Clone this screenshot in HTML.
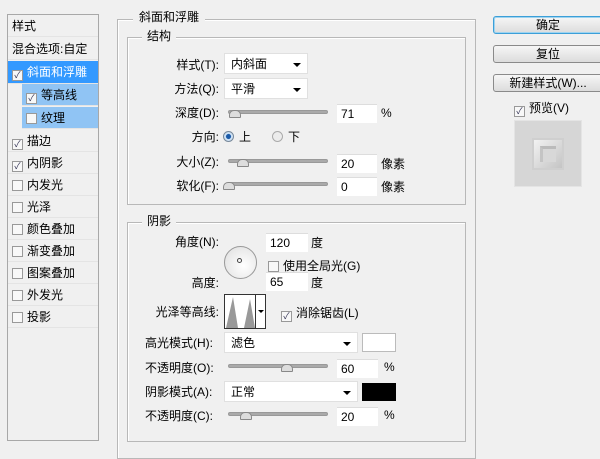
<!DOCTYPE html>
<html><head><meta charset="utf-8"><style>
*{margin:0;padding:0;box-sizing:border-box}
body{width:600px;height:441px;background:#f0f0f0;font-family:"Liberation Sans","Noto Sans CJK SC",sans-serif;font-size:12px;color:#000;position:relative;overflow:hidden}
.a{position:absolute;white-space:nowrap}
.row{position:absolute;left:8px;width:90px;height:22px;line-height:22px;border-bottom:1px solid #e4e4e4;padding-left:4px}
.cb{display:inline-block;width:11px;height:11px;border:1px solid #999;background:#f8f8f8;vertical-align:-2px;margin-right:4px;font-size:9px;line-height:9px;text-align:center;color:#335}
.box{position:absolute;border:1px solid #b8b8b8;box-shadow:1px 1px 0 #fff inset}
.lbl{position:absolute;text-align:right;width:100px;line-height:20px}
.sel{position:absolute;background:#fff;border:1px solid #e0e0e0;height:21px;line-height:20px;padding-left:6px}
.sel:after{content:"";position:absolute;right:6px;top:9px;border:4px solid transparent;border-top:4px solid #000;border-bottom:0}
.trk{position:absolute;height:4px;background:#aaa;border:1px solid #999;border-radius:2px;width:100px;left:228px}
.th{position:absolute;width:12px;height:8px;background:#ddd;border:1px solid #888;border-radius:5px 5px 1px 1px}
.inp{position:absolute;background:#fff;height:19px;line-height:18px;padding-left:4px;border-top:1px solid #ddd}
.btn{position:absolute;left:493px;width:110px;height:18px;border:1px solid #8a8a8a;border-radius:3px;background:linear-gradient(#f6f6f6,#dcdcdc);text-align:center;line-height:16px;font-size:12px}
</style></head><body>
<div class="a" style="left:7px;top:14px;width:92px;height:427px;border:1px solid #a8a8a8;background:#f0f0f0"></div>
<div class="row" style="top:15px">样式</div>
<div class="row" style="top:38px">混合选项:自定</div>
<div class="row" style="top:61px;background:#3399ff;color:#fff;height:23px"><span class="cb">✓</span>斜面和浮雕</div>
<div class="row" style="top:84px;left:22px;width:76px;background:#90c4f4"><span class="cb">✓</span>等高线</div>
<div class="row" style="top:107px;left:22px;width:76px;background:#90c4f4"><span class="cb"></span>纹理</div>
<div class="row" style="top:130px"><span class="cb">✓</span>描边</div>
<div class="row" style="top:152px"><span class="cb">✓</span>内阴影</div>
<div class="row" style="top:174px"><span class="cb"></span>内发光</div>
<div class="row" style="top:196px"><span class="cb"></span>光泽</div>
<div class="row" style="top:218px"><span class="cb"></span>颜色叠加</div>
<div class="row" style="top:240px"><span class="cb"></span>渐变叠加</div>
<div class="row" style="top:262px"><span class="cb"></span>图案叠加</div>
<div class="row" style="top:284px"><span class="cb"></span>外发光</div>
<div class="row" style="top:306px"><span class="cb"></span>投影</div>

<div class="box" style="left:117px;top:19px;width:359px;height:440px"></div>
<div class="a" style="left:133px;top:8px;background:#f0f0f0;padding:0 6px">斜面和浮雕</div>
<div class="box" style="left:127px;top:37px;width:339px;height:168px"></div>
<div class="a" style="left:142px;top:27px;background:#f0f0f0;padding:0 5px">结构</div>

<div class="lbl" style="left:119px;top:55px">样式(T):</div>
<div class="sel" style="left:224px;top:53px;width:84px">内斜面</div>
<div class="lbl" style="left:119px;top:79px">方法(Q):</div>
<div class="sel" style="left:224px;top:78px;width:84px">平滑</div>
<div class="lbl" style="left:119px;top:103px">深度(D):</div>
<div class="trk" style="top:110px"></div><div class="th" style="left:229px;top:110px"></div>
<div class="inp" style="left:337px;top:104px;width:40px">71</div><div class="a" style="left:381px;top:106px">%</div>
<div class="lbl" style="left:119px;top:127px">方向:</div>
<div class="a" style="left:223px;top:131px;width:11px;height:11px;border-radius:50%;background:radial-gradient(#1a5aa8 35%,#cfe2f5 45%);border:1px solid #789"></div>
<div class="a" style="left:239px;top:128px">上</div>
<div class="a" style="left:272px;top:131px;width:11px;height:11px;border-radius:50%;background:#ececec;border:1px solid #aaa"></div>
<div class="a" style="left:288px;top:128px">下</div>
<div class="lbl" style="left:119px;top:152px">大小(Z):</div>
<div class="trk" style="top:159px"></div><div class="th" style="left:237px;top:159px"></div>
<div class="inp" style="left:337px;top:154px;width:40px">20</div><div class="a" style="left:381px;top:155px">像素</div>
<div class="lbl" style="left:119px;top:176px">软化(F):</div>
<div class="trk" style="top:182px"></div><div class="th" style="left:223px;top:182px"></div>
<div class="inp" style="left:337px;top:177px;width:40px">0</div><div class="a" style="left:381px;top:178px">像素</div>

<div class="box" style="left:127px;top:222px;width:339px;height:220px"></div>
<div class="a" style="left:142px;top:212px;background:#f0f0f0;padding:0 5px">阴影</div>
<div class="lbl" style="left:119px;top:232px">角度(N):</div>
<div class="a" style="left:224px;top:246px;width:33px;height:33px;border-radius:50%;border:1px solid #999;background:radial-gradient(circle at 60% 60%,#fff,#ddd)"></div>
<div class="a" style="left:237px;top:258px;width:5px;height:5px;border-radius:50%;border:1px solid #444"></div>
<div class="inp" style="left:266px;top:233px;width:42px">120</div><div class="a" style="left:311px;top:234px">度</div>
<div class="a" style="left:268px;top:257px"><span class="cb"></span>使用全局光(G)</div>
<div class="lbl" style="left:119px;top:273px">高度:</div>
<div class="inp" style="left:266px;top:272px;width:42px">65</div><div class="a" style="left:311px;top:274px">度</div>
<div class="lbl" style="left:119px;top:302px">光泽等高线:</div>
<div class="a" style="left:224px;top:294px;width:32px;height:35px;border:1px solid #333;background:#fff">
<svg width="30" height="33"><path d="M1 33 L8 2 L13 33 Z M19 33 L25 4 L30 33Z" fill="#999"/></svg></div>
<div class="a" style="left:256px;top:294px;width:10px;height:35px;border:1px solid #333;border-left:0;background:#fff"><div style="position:absolute;left:2px;top:15px;border:3px solid transparent;border-top:3px solid #000"></div></div>
<div class="a" style="left:281px;top:304px"><span class="cb">✓</span>消除锯齿(L)</div>
<div class="lbl" style="left:145px;top:333px;text-align:left">高光模式(H):</div>
<div class="sel" style="left:224px;top:332px;width:134px">滤色</div>
<div class="a" style="left:362px;top:333px;width:34px;height:19px;border:1px solid #bbb;background:#fff"></div>
<div class="lbl" style="left:145px;top:358px;text-align:left">不透明度(O):</div>
<div class="trk" style="top:364px"></div><div class="th" style="left:281px;top:364px"></div>
<div class="inp" style="left:337px;top:359px;width:41px">60</div><div class="a" style="left:384px;top:360px">%</div>
<div class="lbl" style="left:145px;top:382px;text-align:left">阴影模式(A):</div>
<div class="sel" style="left:224px;top:381px;width:134px">正常</div>
<div class="a" style="left:362px;top:383px;width:34px;height:18px;background:#000"></div>
<div class="lbl" style="left:145px;top:406px;text-align:left">不透明度(C):</div>
<div class="trk" style="top:412px"></div><div class="th" style="left:240px;top:412px"></div>
<div class="inp" style="left:337px;top:407px;width:41px">20</div><div class="a" style="left:384px;top:408px">%</div>

<div class="btn" style="top:16px;border-color:#3c9fd8;box-shadow:0 0 0 1px #9fd4f0 inset">确定</div>
<div class="btn" style="top:45px">复位</div>
<div class="btn" style="top:74px">新建样式(W)...</div>
<div class="a" style="left:514px;top:99px"><span class="cb">✓</span>预览(V)</div>
<div class="a" style="left:514px;top:120px;width:68px;height:67px;background:#d6d6d6;border:1px solid #e4e4e4"></div>
<div class="a" style="left:532px;top:138px;width:32px;height:32px;background:linear-gradient(135deg,#f2f2f2,#c4c4c4);border:2px solid #cfcfcf"></div>
<div class="a" style="left:540px;top:146px;width:16px;height:16px;background:#d8d8d8;border-top:3px solid #bbb;border-left:3px solid #c4c4c4"></div>
</body></html>
